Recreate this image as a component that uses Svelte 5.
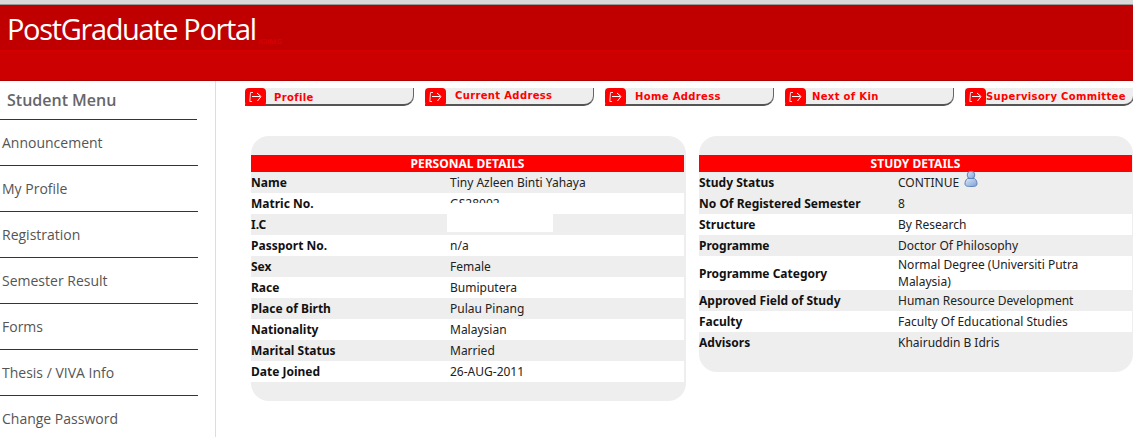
<script>
    const menu = ["Announcement", "My Profile", "Registration", "Semester Result", "Forms", "Thesis / VIVA Info", "Change Password"];

    const tabs = [
        {label: "Profile", pad: 8, dy: 1},
        {label: "Current Address", pad: 9, dy: -1},
        {label: "Home Address", pad: 9, dy: 0},
        {label: "Next of Kin", pad: 6, dy: 0},
        {label: "Supervisory Committee", pad: 0, dy: 0}
    ];

    const personal = [
        ["Name", "Tiny Azleen Binti Yahaya"],
        ["Matric No.", "GS28002"],
        ["I.C", ""],
        ["Passport No.", "n/a"],
        ["Sex", "Female"],
        ["Race", "Bumiputera"],
        ["Place of Birth", "Pulau Pinang"],
        ["Nationality", "Malaysian"],
        ["Marital Status", "Married"],
        ["Date Joined", "26-AUG-2011"]
    ];

    const study = [
        ["Study Status", "CONTINUE", true],
        ["No Of Registered Semester", "8", true],
        ["Structure", "By Research", false],
        ["Programme", "Doctor Of Philosophy", true],
        ["Programme Category", "Normal Degree (Universiti Putra Malaysia)", false],
        ["Approved Field of Study", "Human Resource Development", true],
        ["Faculty", "Faculty Of Educational Studies", false],
        ["Advisors", "Khairuddin B Idris", true]
    ];
</script>

<div class="page">
    <header>
        <div class="brand">
            <span class="title">PostGraduate Portal</span>
            <span class="sub">iGIMS</span>
        </div>
        <div class="strip"></div>
    </header>

    <div class="body">
        <aside>
            <h2>Student Menu</h2>
            <ul>
                {#each menu as item}
                    <li>{item}</li>
                {/each}
            </ul>
        </aside>

        <main>
            <nav>
                {#each tabs as tab}
                    <div class="tab">
                        <span class="tab-icon">
                            <svg width="14" height="12" viewBox="0 0 14 12" fill="none" stroke="#fff" stroke-width="1">
                                <path d="M4 1.5H1.5L0.8 10.5H3" opacity="0.85"/>
                                <path d="M3 5.5H11M8 2L12 5.5L8.5 10"/>
                            </svg>
                        </span>
                        <span class="tab-label" style="--pad: {tab.pad}px; --dy: {tab.dy}px">{tab.label}</span>
                    </div>
                {/each}
            </nav>

            <div class="panels">
                <section class="panel">
                    <h3>PERSONAL DETAILS</h3>
                    {#each personal as row, i}
                        <div class="row" class:grey={i % 2 === 0}>
                            <b>{row[0]}</b>
                            <span>{row[1]}</span>
                        </div>
                    {/each}
                    <div class="redact"></div>
                </section>

                <section class="panel right">
                    <h3>STUDY DETAILS</h3>
                    {#each study as row, i}
                        <div class="row" class:grey={row[2]}>
                            <b>{row[0]}</b>
                            <span class="val">
                                {row[1]}
                                {#if i === 0}
                                    <svg class="user" width="14" height="18" viewBox="0 0 14 18">
                                        <defs>
                                            <linearGradient id="u" x1="0" y1="0" x2="1" y2="1">
                                                <stop offset="0" stop-color="#dbe7f8"/>
                                                <stop offset="1" stop-color="#7d9fd6"/>
                                            </linearGradient>
                                        </defs>
                                        <circle cx="7" cy="5" r="3.8" fill="url(#u)" stroke="#5f82b8"/>
                                        <path d="M3.5 8.5C1.5 10 1 12 1 14C1 16 3 16.5 7 16.5C11 16.5 13 16 13 14C13 12 12.5 10 10.5 8.5Z" fill="url(#u)" stroke="#5f82b8"/>
                                    </svg>
                                {/if}
                            </span>
                        </div>
                    {/each}
                </section>
            </div>
        </main>
    </div>
</div>

<style>
    :global(body) {
        margin: 0;
        background: #fff;
        overflow: hidden;
    }
    .page {
        width: 1133px;
        height: 438px;
        overflow: hidden;
        font-family: "Noto Sans", "Open Sans", sans-serif;
        color: #222;
    }
    header {
        border-top: 4px solid #d9d9d9;
        background: #c00000;
        border-bottom: 1px solid #b00000;
    }
    .brand {
        height: 47px;
        display: flex;
        align-items: flex-end;
        padding-left: 7px;
        border-top: 1px solid #999;
        border-bottom: 1px solid #d40000;
        box-sizing: border-box;
    }
    .title {
        font-family: "Open Sans", sans-serif;
        font-size: 29px;
        line-height: 42px;
        letter-spacing: -1.35px;
        color: #fff;
    }
    .sub {
        font-family: "Liberation Sans", sans-serif;
        font-size: 8px;
        line-height: 17px;
        color: #e00000;
        margin-left: 3px;
        letter-spacing: 0.2px;
    }
    .strip {
        height: 29px;
        background: #cc0000;
    }
    .body {
        display: flex;
    }
    aside {
        width: 215px;
        height: 356px;
        flex: none;
        border-right: 1px solid #ddd;
    }
    h2 {
        margin: 0;
        width: 197px;
        height: 39px;
        box-sizing: border-box;
        padding: 8px 0 0 7px;
        border-bottom: 1px solid #b00000;
        font-size: 16px;
        line-height: 22px;
        font-weight: 600;
        font-family: "Open Sans", sans-serif;
        color: #666;
    }
    ul {
        list-style: none;
        margin: 0;
        padding: 0;
    }
    li {
        width: 198px;
        height: 46px;
        box-sizing: border-box;
        padding: 13px 0 0 2px;
        border-bottom: 1px solid #b00000;
        font-family: "Open Sans", sans-serif;
        font-size: 14px;
        line-height: 20px;
        color: #555;
    }
    li:last-child {
        border-bottom: 0;
    }
    main {
        flex: 1;
        min-width: 0;
        padding: 7px 0 0 29px;
    }
    nav {
        display: flex;
        gap: 11px;
    }
    .tab {
        width: 169px;
        height: 18px;
        flex: none;
        display: flex;
        box-sizing: border-box;
        background: #eeeeee;
        border-bottom: 2px solid #555;
        border-right: 1px solid #666;
        border-bottom-right-radius: 10px;
    }
    .tab-icon {
        width: 21px;
        height: 18px;
        flex: none;
        display: flex;
        align-items: center;
        justify-content: center;
        background: #ff0000;
        border-radius: 4px;
    }
    .tab-label {
        padding-left: var(--pad);
        position: relative;
        top: var(--dy);
        font-family: "DejaVu Sans", sans-serif;
        font-size: 10px;
        font-weight: 700;
        line-height: 17px;
        letter-spacing: 0.35px;
        color: #f00;
        white-space: nowrap;
    }
    .panels {
        display: flex;
        align-items: flex-start;
        gap: 13px;
        margin: 30px 0 0 6px;
    }
    .panel {
        position: relative;
        width: 435px;
        flex: none;
        box-sizing: border-box;
        padding: 19px 2px 19px 0;
        background: #eeeeee;
        border-radius: 18px;
    }
    .panel.right {
        width: 434px;
        padding-right: 1px;
    }
    h3 {
        margin: 0;
        height: 17px;
        background: #f00;
        color: #fff;
        font-size: 12px;
        line-height: 18px;
        font-weight: 700;
        text-align: center;
    }
    .row {
        display: flex;
        align-items: center;
        min-height: 21px;
        background: #fff;
        font-size: 12px;
        line-height: 17px;
    }
    .row.grey {
        background: #eeeeee;
    }
    .row b {
        width: 199px;
        flex: none;
        color: #111;
    }
    .val {
        max-width: 210px;
        display: flex;
        align-items: flex-start;
        gap: 5px;
    }
    .row span {
        color: #222;
    }
    .user {
        flex: none;
        margin-top: -4px;
    }
    .redact {
        position: absolute;
        left: 196px;
        top: 67px;
        width: 106px;
        height: 29px;
        background: #fff;
    }
</style>
